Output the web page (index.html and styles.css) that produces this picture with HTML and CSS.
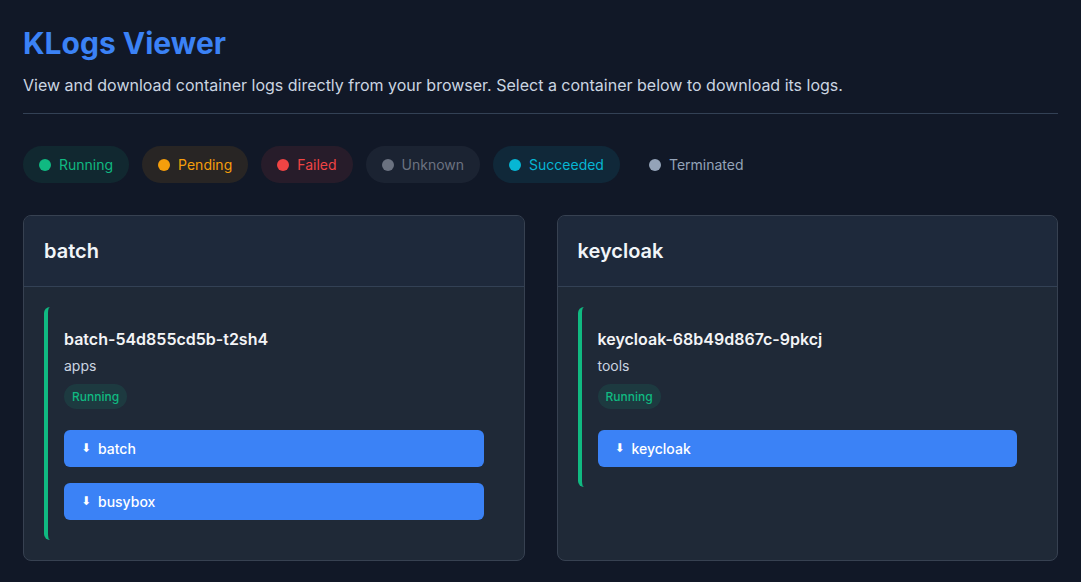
FILE: index.html
```html
<!DOCTYPE html>
<html lang="en">
<head>
<meta charset="utf-8">
<title>KLogs Viewer</title>
<link rel="stylesheet" href="styles.css">
</head>
<body>
<div class="page">
  <header class="header">
    <h1 class="title">KLogs Viewer</h1>
    <p class="subtitle">View and download container logs directly from your browser. Select a container below to download its logs.</p>
  </header>

  <div class="legend">
    <span class="pill pill-running"><span class="dot"></span>Running</span>
    <span class="pill pill-pending"><span class="dot"></span>Pending</span>
    <span class="pill pill-failed"><span class="dot"></span>Failed</span>
    <span class="pill pill-unknown"><span class="dot"></span>Unknown</span>
    <span class="pill pill-succeeded"><span class="dot"></span>Succeeded</span>
    <span class="pill pill-terminated"><span class="dot"></span>Terminated</span>
  </div>

  <div class="grid">
    <section class="card">
      <div class="card-head"><h2 class="card-title">batch</h2></div>
      <div class="card-body">
        <div class="pod">
          <div class="pod-name">batch-54d855cd5b-t2sh4</div>
          <div class="pod-ns">apps</div>
          <span class="status">Running</span>
          <div class="buttons">
            <button class="dl"><span class="arrow">⬇</span>batch</button>
            <button class="dl"><span class="arrow">⬇</span>busybox</button>
          </div>
        </div>
      </div>
    </section>

    <section class="card">
      <div class="card-head"><h2 class="card-title">keycloak</h2></div>
      <div class="card-body">
        <div class="pod">
          <div class="pod-name">keycloak-68b49d867c-9pkcj</div>
          <div class="pod-ns">tools</div>
          <span class="status">Running</span>
          <div class="buttons">
            <button class="dl"><span class="arrow">⬇</span>keycloak</button>
          </div>
        </div>
      </div>
    </section>
  </div>
</div>
</body>
</html>
```

FILE: styles.css
```css
* { box-sizing: border-box; }

html, body {
  margin: 0;
  padding: 0;
  background: #111827;
  overflow: hidden;
}

body {
  font-family: Inter, "Noto Sans", sans-serif;
  color: #e5e7eb;
}

.page {
  padding: 25px 23px 20px;
}

.header {
  border-bottom: 1px solid #334155;
  padding-bottom: 16px;
}

.title {
  margin: 0 0 12px;
  font-size: 30px;
  line-height: 36px;
  font-weight: 700;
  color: #3b82f6;
}

.subtitle {
  margin: 0;
  font-size: 16px;
  line-height: 24px;
  color: #cbd5e1;
}

.legend {
  display: flex;
  gap: 13px;
  margin-top: 32px;
}

.pill {
  display: inline-flex;
  align-items: center;
  gap: 8px;
  padding: 8px 16px;
  border-radius: 999px;
  font-size: 14px;
  line-height: 21px;
}

.dot {
  width: 12px;
  height: 12px;
  border-radius: 50%;
  background: currentColor;
}

.pill-running { color: #10b981; background: rgba(16, 185, 129, 0.1); }
.pill-pending { color: #f59e0b; background: rgba(245, 158, 11, 0.1); }
.pill-failed { color: #ef4444; background: rgba(239, 68, 68, 0.1); }
.pill-unknown { color: #6b7280; background: rgba(107, 114, 128, 0.12); }
.pill-succeeded { color: #06b6d4; background: rgba(6, 182, 212, 0.1); }
.pill-terminated { color: #94a3b8; background: transparent; }

.grid {
  display: grid;
  grid-template-columns: 1fr 1fr;
  gap: 32px;
  margin-top: 32px;
}

.card {
  background: #1f2937;
  border: 1px solid #374151;
  border-radius: 8px;
  overflow: hidden;
}

.card-head {
  background: #1e293b;
  padding: 20px;
  border-bottom: 1px solid #334155;
}

.card-title {
  margin: 0;
  font-size: 20px;
  line-height: 30px;
  font-weight: 600;
  color: #f1f5f9;
}

.card-body {
  padding: 20px;
}

.pod {
  border-left: 4px solid #10b981;
  border-radius: 6px;
  padding: 20px 20px 20px 16px;
}

.pod-name {
  font-size: 16px;
  line-height: 24px;
  font-weight: 600;
  color: #f3f4f6;
}

.pod-ns {
  margin-top: 4px;
  font-size: 14px;
  line-height: 21px;
  color: #cbd5e1;
}

.status {
  display: inline-block;
  margin-top: 8px;
  padding: 4px 8px;
  border-radius: 999px;
  font-size: 12px;
  line-height: 17px;
  font-weight: 500;
  color: #10b981;
  background: rgba(16, 185, 129, 0.12);
}

.buttons {
  display: flex;
  flex-direction: column;
  gap: 16px;
  margin-top: 21px;
}

.dl {
  display: flex;
  align-items: center;
  width: 100%;
  border: 0;
  border-radius: 6px;
  background: #3b82f6;
  color: #ffffff;
  padding: 8px 16px;
  font-family: Inter, "Noto Sans", sans-serif;
  font-size: 14px;
  line-height: 21px;
  font-weight: 500;
  text-align: left;
}

.arrow {
  font-family: "DejaVu Sans", sans-serif;
  font-size: 12px;
  width: 18px;
  padding-left: 1px;
}
```
